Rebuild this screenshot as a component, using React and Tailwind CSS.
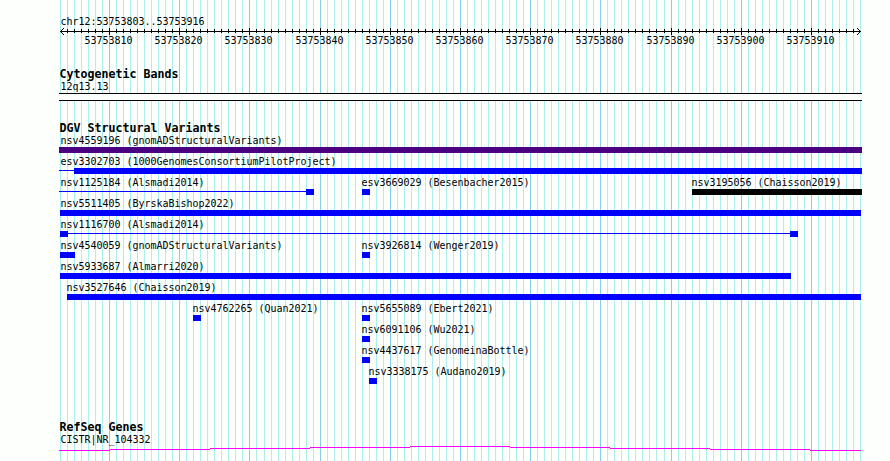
const LEFT = 60;
const WIDTH = 800;
const START = 53753803;
const BASES = 114;

const ticks = Array.from({ length: BASES + 1 }, (_, i) => ({
  x: LEFT + Math.round((i * WIDTH) / BASES),
  pos: START + i,
  major: (START + i) % 10 === 0,
}));

const majors = ticks.filter((t) => t.major);

// each shape is [from, to] in pixels, "line" is the thin connector
const rows = [
  [{ label: 'nsv4559196 (gnomADStructuralVariants)', x: 60, color: 'bg-[#4b0082]', blocks: [[59, 862]] }],
  [{ label: 'esv3302703 (1000GenomesConsortiumPilotProject)', x: 60, line: [59, 74], blocks: [[74, 862]] }],
  [
    { label: 'nsv1125184 (Alsmadi2014)', x: 60, line: [59, 306], blocks: [[306, 314]] },
    { label: 'esv3669029 (Besenbacher2015)', x: 361, blocks: [[362, 370]] },
    { label: 'nsv3195056 (Chaisson2019)', x: 691, color: 'bg-black', blocks: [[692, 862]] },
  ],
  [{ label: 'nsv5511405 (ByrskaBishop2022)', x: 60, blocks: [[60, 861]] }],
  [{ label: 'nsv1116700 (Alsmadi2014)', x: 60, line: [68, 790], blocks: [[60, 68], [790, 798]] }],
  [
    { label: 'nsv4540059 (gnomADStructuralVariants)', x: 60, blocks: [[60, 75]] },
    { label: 'nsv3926814 (Wenger2019)', x: 361, blocks: [[362, 370]] },
  ],
  [{ label: 'nsv5933687 (Almarri2020)', x: 60, blocks: [[60, 791]] }],
  [{ label: 'nsv3527646 (Chaisson2019)', x: 66, blocks: [[67, 861]] }],
  [
    { label: 'nsv4762265 (Quan2021)', x: 192, blocks: [[193, 201]] },
    { label: 'nsv5655089 (Ebert2021)', x: 361, blocks: [[362, 370]] },
  ],
  [{ label: 'nsv6091106 (Wu2021)', x: 361, blocks: [[362, 370]] }],
  [{ label: 'nsv4437617 (GenomeinaBottle)', x: 361, blocks: [[362, 370]] }],
  [{ label: 'nsv3338175 (Audano2019)', x: 368, blocks: [[369, 377]] }],
];

function Label({ x = 60, children }) {
  return (
    <div
      className="h-3 w-max origin-[0_9px] scale-y-[1.12] pl-[0.6px] text-[10px] leading-3 tracking-[-0.02px] whitespace-pre"
      style={{ marginLeft: x }}
    >
      {children}
    </div>
  );
}

function Heading({ children }) {
  return (
    <h2 className="mb-px ml-[59.6px] h-3 text-[11.63px] leading-3 font-bold whitespace-pre">{children}</h2>
  );
}

function Gridlines() {
  return (
    <svg className="absolute inset-0" width="890" height="461" shapeRendering="crispEdges">
      {ticks.map((t) => (
        <rect key={t.pos} x={t.x} y="0" width="1" height="461" fill={t.major ? '#87ceeb' : '#afeeee'} />
      ))}
    </svg>
  );
}

function Ruler() {
  return (
    <div>
      <svg className="block" width="890" height="7" shapeRendering="crispEdges">
        <rect x="60" y="3" width="801" height="1" />
        {ticks.slice(1, -1).map((t) => (
          <rect key={t.pos} x={t.x} y={t.major ? 0 : 1} width="1" height={t.major ? 7 : 4} />
        ))}
        {[1, 2, 3].map((d) => (
          <g key={d}>
            <rect x={60 + d} y={3 - d} width="1" height="1" />
            <rect x={60 + d} y={3 + d} width="1" height="1" />
            <rect x={860 - d} y={3 - d} width="1" height="1" />
            <rect x={860 - d} y={3 + d} width="1" height="1" />
          </g>
        ))}
      </svg>
      <div className="grid">
        {majors.map((t) => (
          <div key={t.pos} className="[grid-area:1/1]">
            <Label x={t.x - 25}>{t.pos}</Label>
          </div>
        ))}
      </div>
    </div>
  );
}

function Bar({ from, to, className }) {
  return <div className={`[grid-area:1/1] ${className}`} style={{ marginLeft: from, width: to - from }} />;
}

function Variant({ item }) {
  const color = item.color || 'bg-[#0000ff]';
  return (
    <div className="[grid-area:1/1]">
      <Label x={item.x}>{item.label}</Label>
      <div className="grid h-1.5">
        {item.line && <Bar from={item.line[0]} to={item.line[1]} className="mt-0.5 h-px bg-[#0000ff]" />}
        {item.blocks.map(([from, to]) => (
          <Bar key={from} from={from} to={to} className={`h-1.5 ${color}`} />
        ))}
      </div>
    </div>
  );
}

export default function App() {
  return (
    <div className="relative h-[461px] w-[890px] overflow-hidden bg-[#fdfffd] font-['DejaVu_Sans_Mono',monospace] text-black">
      <Gridlines />
      <div className="relative flex flex-col">
        <header className="pt-4">
          <Label>chr12:53753803..53753916</Label>
          <Ruler />
        </header>

        <section className="mt-[21px]">
          <Heading>Cytogenetic Bands</Heading>
          <Label>12q13.13</Label>
          <div className="ml-[59px] h-2 w-[803px] border-y border-black bg-[#fdfffd]" />
        </section>

        <section className="mt-[21px]">
          <Heading>DGV Structural Variants</Heading>
          <div className="flex flex-col gap-[3px]">
            {rows.map((items, i) => (
              <div key={i} className="grid h-[18px]">
                {items.map((item) => (
                  <Variant key={item.label} item={item} />
                ))}
              </div>
            ))}
          </div>
        </section>

        <section className="mt-[37px]">
          <Heading>RefSeq Genes</Heading>
          <Label>CISTR|NR_104332</Label>
          <svg className="block" width="890" height="15" shapeRendering="crispEdges" fill="#ff00ff">
            <rect x="59" y="4" width="51" height="1" />
            <rect x="110" y="3" width="100" height="1" />
            <rect x="210" y="2" width="100" height="1" />
            <rect x="310" y="1" width="100" height="1" />
            <rect x="410" y="0" width="100" height="1" />
            <rect x="510" y="1" width="100" height="1" />
            <rect x="610" y="2" width="100" height="1" />
            <rect x="710" y="3" width="100" height="1" />
            <rect x="810" y="4" width="51" height="1" />
          </svg>
        </section>
      </div>
    </div>
  );
}
